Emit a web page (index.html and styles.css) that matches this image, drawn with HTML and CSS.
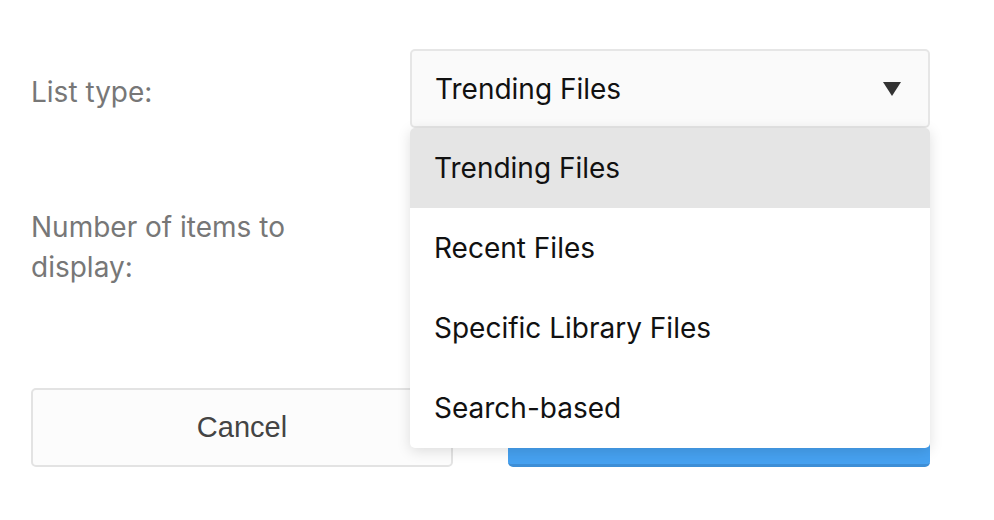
FILE: index.html
```html
<!DOCTYPE html>
<html>
<head>
<meta charset="utf-8">
<link rel="stylesheet" href="styles.css">
</head>
<body>
<div class="form">
  <div class="row">
    <div class="label">List type:</div>
    <div class="control">
      <div class="select">
        <span class="select-value">Trending Files</span>
        <span class="caret"></span>
      </div>
      <ul class="menu">
        <li class="option active">Trending Files</li>
        <li class="option">Recent Files</li>
        <li class="option">Specific Library Files</li>
        <li class="option">Search-based</li>
      </ul>
    </div>
  </div>
  <div class="row row-2">
    <div class="label label-narrow">Number of items to display:</div>
    <div class="control">
      <div class="input"></div>
    </div>
  </div>
  <div class="actions">
    <button class="btn btn-cancel">Cancel</button>
    <button class="btn btn-primary"></button>
  </div>
</div>
</body>
</html>
```

FILE: styles.css
```css
html, body {
  margin: 0;
  padding: 0;
  background: #ffffff;
}
body {
  font-family: Inter, "Noto Sans", sans-serif;
  width: 994px;
  height: 520px;
  overflow: hidden;
}
.form {
  padding: 49px 0 0 31px;
  width: 899px;
}
.row {
  display: grid;
  grid-template-columns: 379px 520px;
  align-items: start;
}
.row-2 {
  margin-top: 56px;
}
.label {
  font-size: 28px;
  line-height: 40px;
  color: #777777;
  padding-top: 23px;
}
.label-narrow {
  max-width: 320px;
}
.control {
  position: relative;
}
.select {
  box-sizing: border-box;
  height: 79px;
  border: 2px solid #e6e6e6;
  border-radius: 5px;
  background: #fafafa;
  display: flex;
  align-items: center;
  justify-content: space-between;
  padding: 0 27px 0 23px;
}
.select-value {
  font-size: 28px;
  color: #111111;
}
.caret {
  width: 0;
  height: 0;
  border-left: 9px solid transparent;
  border-right: 9px solid transparent;
  border-top: 14px solid #333333;
  margin-top: 1px;
}
.menu {
  position: absolute;
  top: 79px;
  left: 0;
  width: 520px;
  margin: 0;
  padding: 0;
  list-style: none;
  background: #ffffff;
  border-radius: 5px;
  box-shadow: 0 3px 14px rgba(0, 0, 0, 0.13);
  overflow: hidden;
  z-index: 10;
}
.option {
  height: 80px;
  display: flex;
  align-items: center;
  padding-left: 24px;
  font-size: 28px;
  color: #111111;
}
.option.active {
  background: #e5e5e5;
}
.input {
  box-sizing: border-box;
  height: 79px;
  border: 2px solid #e6e6e6;
  border-radius: 5px;
  background: #fafafa;
}
.actions {
  display: flex;
  gap: 55px;
  margin-top: 101px;
}
.btn {
  width: 422px;
  box-sizing: border-box;
  height: 79px;
  border-radius: 5px;
  font-family: "Liberation Sans", Arial, sans-serif;
  font-size: 29px;
  padding: 0;
}
.btn-cancel {
  background: #fcfcfc;
  border: 2px solid #e3e3e3;
  color: #444444;
}
.btn-primary {
  background: #46a1f0;
  border: none;
  border-bottom: 3px solid #3d8ed6;
  color: #ffffff;
}
```
